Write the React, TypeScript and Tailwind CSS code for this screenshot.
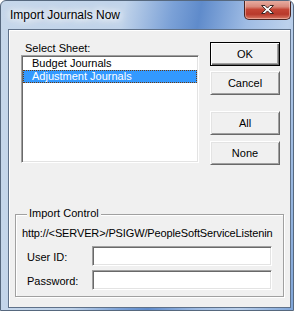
import React from "react";

const font = "font-['Liberation_Sans',Arial,sans-serif]";

function CloseGlyph() {
  return (
    <svg width="15" height="11" viewBox="0 0 15 11">
      <path
        d="M1.5 1.5h3.5l2.5 2.6 2.5-2.6h3.5l-4.2 4 4.2 4h-3.5l-2.5-2.6-2.5 2.6h-3.5l4.2-4z"
        fill="#fff"
        stroke="#3a2624"
        strokeWidth="1"
        strokeLinejoin="round"
      />
    </svg>
  );
}

function Button({ label, isDefault }: { label: string; isDefault?: boolean }) {
  const look = isDefault
    ? "border border-black shadow-[inset_1px_1px_0_#fff,inset_-1px_-1px_0_#696969,inset_-2px_-2px_0_#a0a0a0]"
    : "border border-t-white border-l-white border-r-[#696969] border-b-[#696969] shadow-[inset_1px_1px_0_#e3e3e3,inset_-1px_-1px_0_#a0a0a0]";
  return (
    <div
      className={`flex h-[24px] w-[70px] items-center justify-center bg-[#f0f0f0] text-[11px] leading-[13px] text-black ${look}`}
    >
      {label}
    </div>
  );
}

const sunken =
  "border border-t-[#a0a0a0] border-l-[#a0a0a0] border-r-white border-b-white shadow-[inset_1px_1px_0_#696969,inset_-1px_-1px_0_#e3e3e3] bg-white";

export default function App() {
  const sheets = ["Budget Journals", "Adjustment Journals"];
  const selected = 1;

  return (
    <div
      className={`${font} flex h-[311px] w-[294px] flex-col overflow-hidden rounded-t-[6px] border border-[#56687e] bg-[linear-gradient(100deg,#c6d7ea_0%,#c0d3ea_36%,#7ba1d7_50%,#5f8bcb_58%,#9fbce4_72%,#bcd1ec_84%,#7fa5d8_100%)]`}
    >
      {/* title bar */}
      <div className="flex h-[28px] shrink-0 items-start">
        <span className="ml-[9px] mt-[7px] text-[12px] leading-[14px] text-black [text-shadow:0_0_6px_#fff,0_0_10px_#fff,0_0_14px_#fff]">
          Import Journals Now
        </span>
        <div className="ml-auto mr-[2px] -mt-px flex h-[20px] w-[47px] items-center justify-center rounded-b-[5px] border border-t-0 border-[#4a2420] bg-[linear-gradient(180deg,#e9b2a7_0%,#d98a7c_35%,#c44535_50%,#b8392b_75%,#d97a66_100%)] shadow-[inset_0_0_0_1px_rgba(255,220,210,0.45)]">
          <CloseGlyph />
        </div>
      </div>

      {/* client area */}
      <div className="mb-[2px] ml-[7px] mr-[2px] flex flex-1 flex-col border border-[#5f7189] bg-[#f0f0f0] shadow-[inset_1px_1px_0_#fff]">
        <div className="flex h-[184px] shrink-0 items-start pl-[12px] pt-[12px]">
          <div className="flex w-[178px] flex-col">
            <span className="pl-[4px] text-[11px] leading-[13px] text-black">Select Sheet:</span>
            <div className={`h-[108px] w-[178px] p-[1px] ${sunken}`}>
              {sheets.map((s, i) =>
                i === selected ? (
                  <div
                    key={s}
                    className="h-[13px] border border-dotted border-[#6b3a10] bg-[#3399ff] pl-[8px] text-[11px] leading-[11px] text-white"
                  >
                    {s}
                  </div>
                ) : (
                  <div key={s} className="h-[13px] pl-[9px] text-[11px] leading-[13px] text-black">
                    {s}
                  </div>
                )
              )}
            </div>
          </div>
          <div className="ml-[11px] flex flex-col">
            <Button label="OK" isDefault />
            <div className="mt-[5px]">
              <Button label="Cancel" />
            </div>
            <div className="mt-[16px]">
              <Button label="All" />
            </div>
            <div className="mt-[6px]">
              <Button label="None" />
            </div>
          </div>
        </div>

        {/* Import Control group */}
        <div className="relative mx-[6px] flex flex-col border border-[#a0a0a0] pb-[6px] pt-[12px] shadow-[inset_1px_1px_0_#fff,1px_1px_0_#fff]">
          <span className="absolute left-[11px] top-[-8px] bg-[#f0f0f0] px-[2px] text-[11px] leading-[13px] text-black">
            Import Control
          </span>
          <div className="h-[13px] whitespace-nowrap pl-[6px] text-[11px] leading-[13px] tracking-[-0.13px] text-black">
            http://&lt;SERVER&gt;/PSIGW/PeopleSoftServiceListenin
          </div>
          <div className="mt-[6px] flex items-center pl-[11px]">
            <span className="w-[65px] pt-[3px] text-[11px] leading-[13px] text-black">User ID:</span>
            <div className={`h-[20px] w-[180px] ${sunken}`} />
          </div>
          <div className="mt-[4px] flex items-center pl-[11px]">
            <span className="w-[65px] pt-[3px] text-[11px] leading-[13px] text-black">Password:</span>
            <div className={`h-[20px] w-[180px] ${sunken}`} />
          </div>
        </div>
      </div>
    </div>
  );
}
